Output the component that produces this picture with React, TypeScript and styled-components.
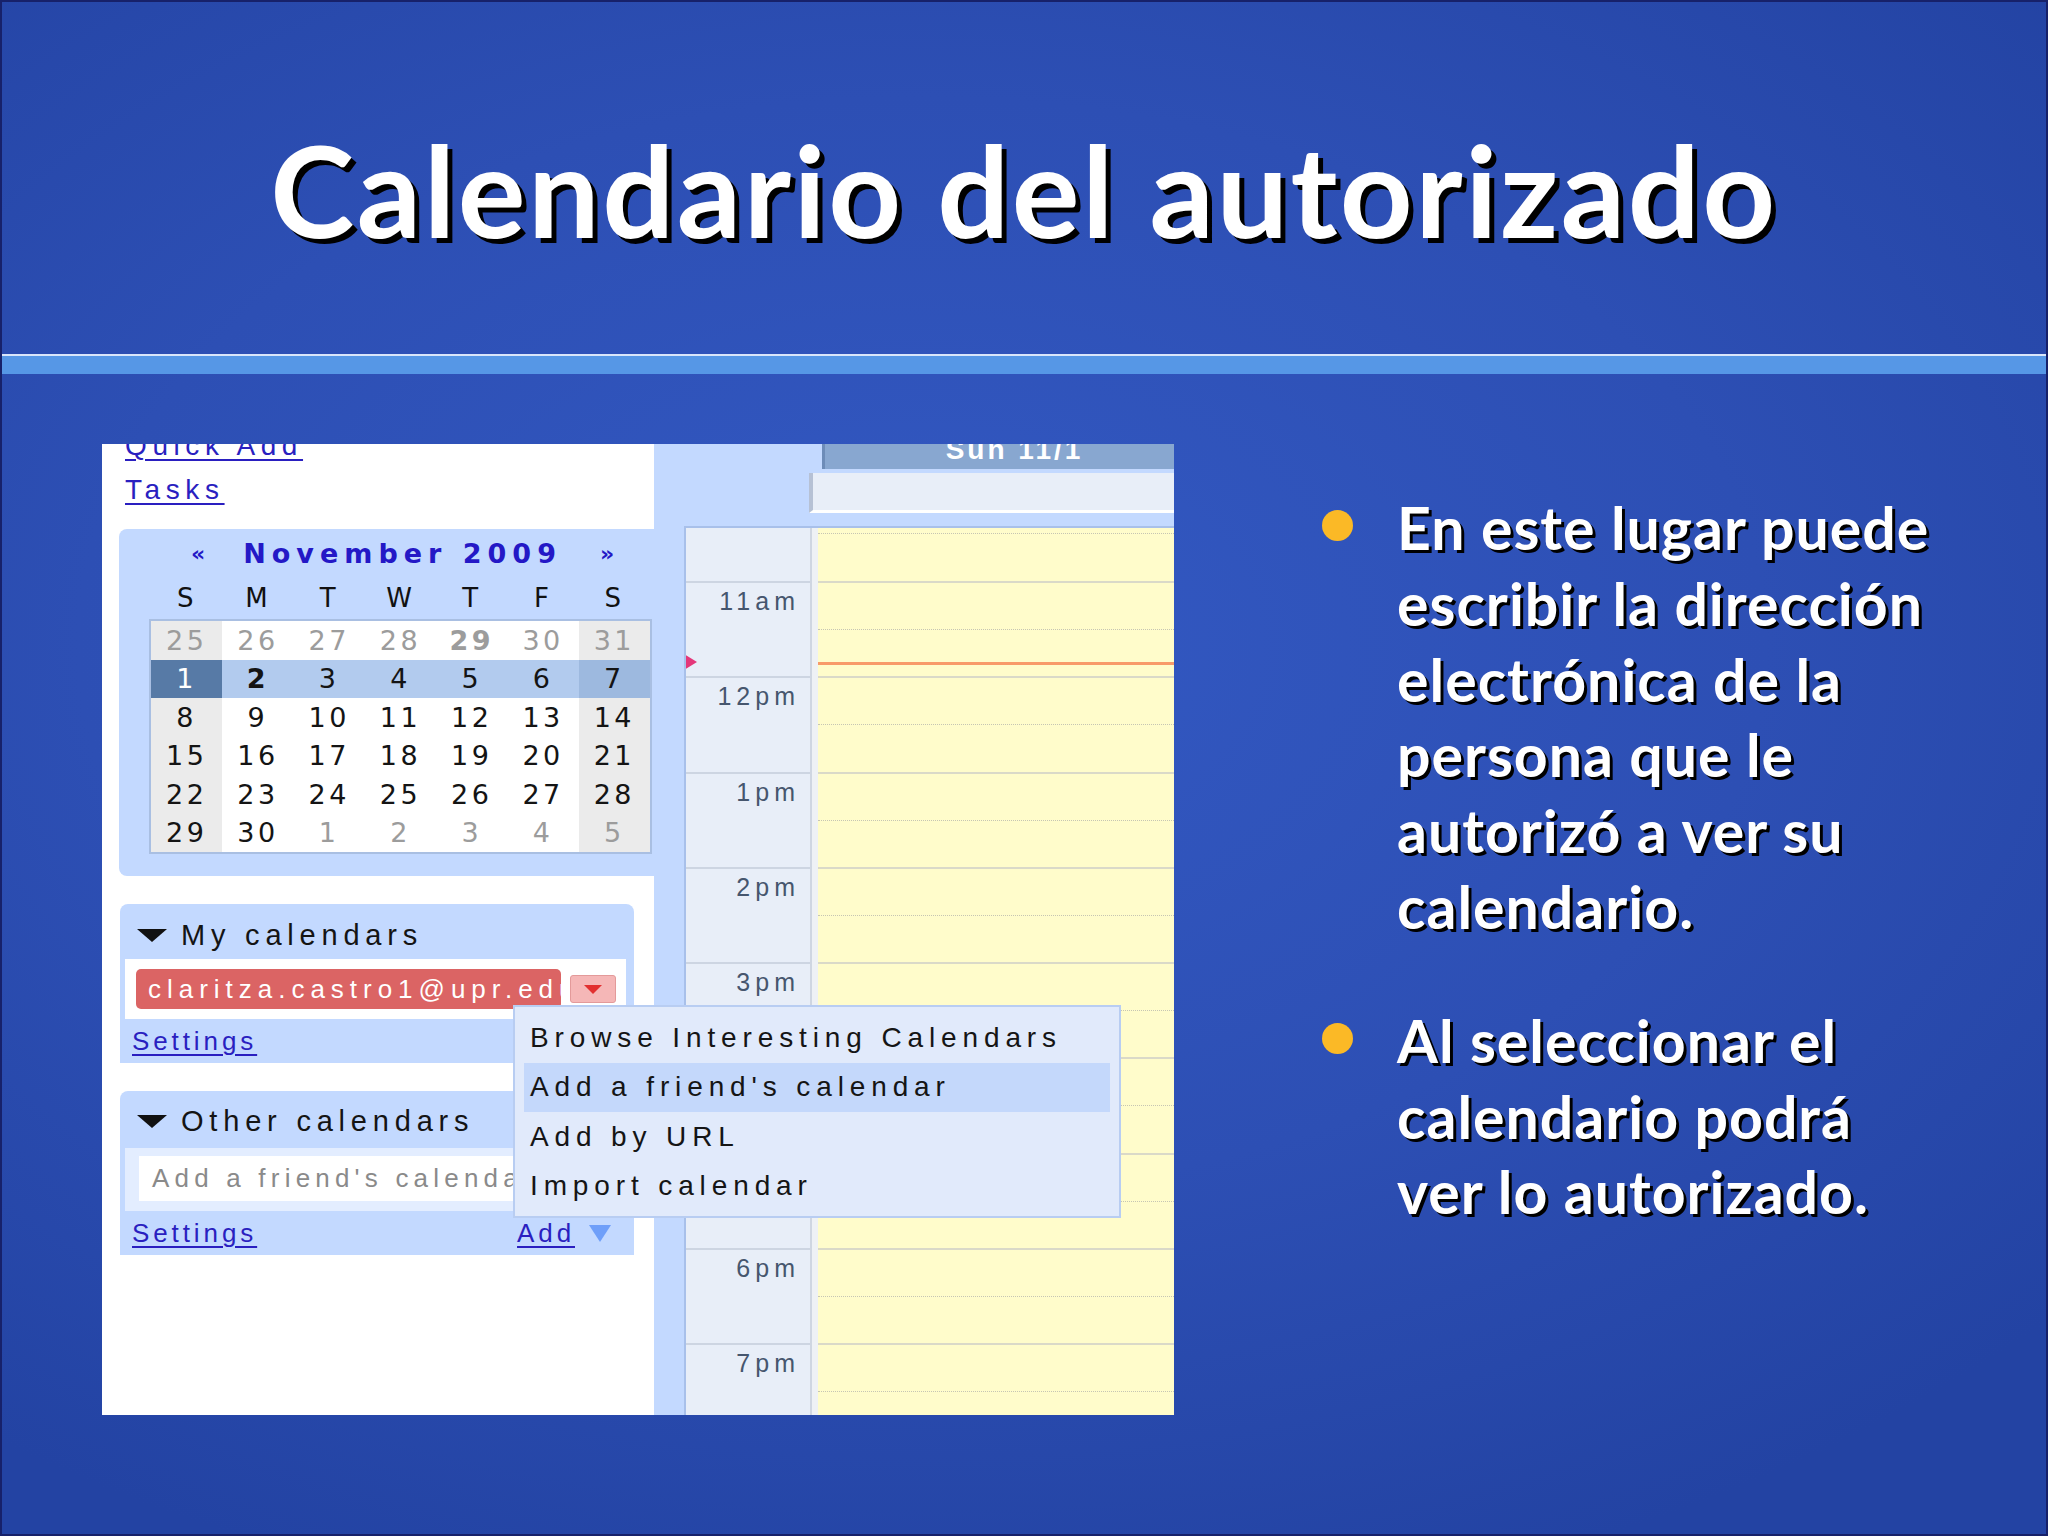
import styled, { createGlobalStyle } from "styled-components";

const GlobalStyle = createGlobalStyle`
  html, body {
    margin: 0;
    padding: 0;
    background: #2242a0;
  }
  body {
    width: 2048px;
    height: 1536px;
    overflow: hidden;
  }
`;

const weeks: number[][] = [
  [25, 26, 27, 28, 29, 30, 31],
  [1, 2, 3, 4, 5, 6, 7],
  [8, 9, 10, 11, 12, 13, 14],
  [15, 16, 17, 18, 19, 20, 21],
  [22, 23, 24, 25, 26, 27, 28],
  [29, 30, 1, 2, 3, 4, 5],
];

const hours = ["11am", "12pm", "1pm", "2pm", "3pm", "4pm", "5pm", "6pm", "7pm"];

const menuItems = [
  "Browse Interesting Calendars",
  "Add a friend's calendar",
  "Add by URL",
  "Import calendar",
];

const bullets: string[][] = [
  [
    "En este lugar puede",
    "escribir la dirección",
    "electrónica de la",
    "persona que le",
    "autorizó a ver su",
    "calendario.",
  ],
  ["Al seleccionar el", "calendario podrá", "ver lo autorizado."],
];

function isMuted(row: number, day: number) {
  return (row === 0 && day > 20) || (row === 5 && day < 20);
}

function DownTriangle({ color, w, h }: { color: string; w: number; h: number }) {
  return (
    <svg width={w} height={h} viewBox={`0 0 ${w} ${h}`}>
      <path d={`M0 0 H${w} L${w / 2} ${h} Z`} fill={color} />
    </svg>
  );
}

export default function App() {
  return (
    <>
      <GlobalStyle />
      <Slide>
        <Header>
          <Title>Calendario del autorizado</Title>
        </Header>
        <Divider />
        <Body>
          <Screenshot>
            <Sidebar>
              <QuickLinks>
                <NavLink>Quick Add</NavLink>
                <NavLink>Tasks</NavLink>
              </QuickLinks>

              <MiniCal>
                <MonthNav>
                  <NavArrow>«</NavArrow>
                  <MonthTitle>November 2009</MonthTitle>
                  <NavArrow $right>»</NavArrow>
                </MonthNav>
                <DayHeads>
                  {["S", "M", "T", "W", "T", "F", "S"].map((d, i) => (
                    <DayHead key={i}>{d}</DayHead>
                  ))}
                </DayHeads>
                <DayGrid>
                  {weeks.map((week, r) =>
                    week.map((day, c) => (
                      <DayCell
                        key={`${r}-${c}`}
                        $weekend={c === 0 || c === 6}
                        $week={r === 1}
                        $selected={r === 1 && c === 0}
                        $muted={isMuted(r, day)}
                        $bold={(r === 0 && day === 29) || (r === 1 && day === 2)}
                      >
                        {day}
                      </DayCell>
                    ))
                  )}
                </DayGrid>
              </MiniCal>

              <CalPanel>
                <PanelHeader>
                  <DownTriangle color="#111" w={30} h={13} />
                  <span>My calendars</span>
                </PanelHeader>
                <EmailRow>
                  <EmailChip>claritza.castro1@upr.edu</EmailChip>
                  <ChipButton>
                    <DownTriangle color="#e23030" w={18} h={9} />
                  </ChipButton>
                </EmailRow>
                <PanelFooter>
                  <SmallLink>Settings</SmallLink>
                </PanelFooter>
              </CalPanel>

              <CalPanel>
                <PanelHeader $tall>
                  <DownTriangle color="#111" w={30} h={13} />
                  <span>Other calendars</span>
                </PanelHeader>
                <InputRow>
                  <FriendInput>Add a friend's calendar</FriendInput>
                </InputRow>
                <PanelFooter>
                  <SmallLink>Settings</SmallLink>
                  <AddGroup>
                    <SmallLink>Add</SmallLink>
                    <DownTriangle color="#6f9ff9" w={22} h={17} />
                  </AddGroup>
                </PanelFooter>
              </CalPanel>
            </Sidebar>

            <DayArea>
              <DayHeader>
                <DayHeaderText>Sun 11/1</DayHeaderText>
              </DayHeader>
              <AllDay />
              <TimeGrid>
                <HourRow $partial>
                  <TimeCell $partial />
                  <Gutter />
                  <DayColumn $partial>
                    <HalfLine $partial />
                  </DayColumn>
                </HourRow>
                {hours.map((h) => (
                  <HourRow key={h}>
                    <TimeCell>{h}</TimeCell>
                    <Gutter />
                    <DayColumn>
                      <HalfLine />
                    </DayColumn>
                  </HourRow>
                ))}
                <NowArrow />
                <NowLine />
              </TimeGrid>
            </DayArea>

            <AddMenu>
              {menuItems.map((item, i) => (
                <MenuItem key={item} $active={i === 1}>
                  {item}
                </MenuItem>
              ))}
            </AddMenu>
          </Screenshot>

          <BulletList>
            {bullets.map((lines, i) => (
              <Bullet key={i}>
                <Dot />
                <BulletText>
                  {lines.map((line) => (
                    <Line key={line}>{line}</Line>
                  ))}
                </BulletText>
              </Bullet>
            ))}
          </BulletList>
        </Body>
      </Slide>
    </>
  );
}

const Slide = styled.div`
  width: 2048px;
  height: 1536px;
  box-sizing: border-box;
  border: 2px solid #17216a;
  background: radial-gradient(
    ellipse 75% 65% at 45% 42%,
    #3359c3 0%,
    #2d4fb4 55%,
    #2343a3 100%
  );
  display: flex;
  flex-direction: column;
  overflow: hidden;
  font-family: Lato, "Open Sans", sans-serif;
`;

const Header = styled.div`
  height: 352px;
  box-sizing: border-box;
  padding-top: 111px;
  display: flex;
  justify-content: center;
`;

const Title = styled.h1`
  margin: 0;
  font-size: 127px;
  line-height: 152px;
  font-weight: 700;
  letter-spacing: 2.5px;
  color: #ffffff;
  text-shadow: 5px 5px 0 #000;
  white-space: nowrap;
`;

const Divider = styled.div`
  height: 18px;
  border-top: 2px solid #d9e6fb;
  background: #5697e6;
`;

const Body = styled.div`
  flex: 1;
  display: flex;
  align-items: flex-start;
  padding: 70px 0 0 100px;
`;

const Screenshot = styled.div`
  position: relative;
  width: 1072px;
  height: 971px;
  flex-shrink: 0;
  display: flex;
  overflow: hidden;
  font-family: "Liberation Sans", Arial, sans-serif;
`;

const Sidebar = styled.div`
  width: 552px;
  flex-shrink: 0;
  background: #ffffff;
  display: flex;
  flex-direction: column;
  overflow: hidden;
`;

const QuickLinks = styled.div`
  margin-top: -20px;
  padding-left: 23px;
  display: flex;
  flex-direction: column;
  align-items: flex-start;
`;

const NavLink = styled.a`
  font-size: 28px;
  line-height: 44px;
  color: #2a1fc0;
  letter-spacing: 0.2em;
  text-decoration: underline;
  text-decoration-thickness: 2px;
  text-underline-offset: 4px;
`;

const MiniCal = styled.div`
  margin: 17px 0 0 17px;
  padding: 0 2px 22px 30px;
  background: #c3d9ff;
  border-radius: 8px 0 0 8px;
  font-family: "DejaVu Sans", Verdana, sans-serif;
`;

const MonthNav = styled.div`
  height: 48px;
  display: flex;
  align-items: center;
  padding-left: 42px;
  gap: 38px;
  color: #2418c6;
  font-weight: bold;
`;

const NavArrow = styled.span<{ $right?: boolean }>`
  font-size: 22px;
  margin-left: ${(p) => (p.$right ? "0" : "0")};
`;

const MonthTitle = styled.span`
  font-size: 27px;
  letter-spacing: 6px;
`;

const DayHeads = styled.div`
  height: 42px;
  padding: 0 2px;
  display: grid;
  grid-template-columns: repeat(7, 1fr);
  align-items: center;
`;

const DayHead = styled.span`
  text-align: center;
  font-size: 26px;
  letter-spacing: 3px;
  color: #111;
`;

const DayGrid = styled.div`
  border: 2px solid #a9bfe2;
  display: grid;
  grid-template-columns: repeat(7, 1fr);
  grid-auto-rows: 38.5px;
`;

const DayCell = styled.span<{
  $weekend: boolean;
  $week: boolean;
  $selected: boolean;
  $muted: boolean;
  $bold: boolean;
}>`
  display: flex;
  align-items: center;
  justify-content: center;
  font-size: 27px;
  letter-spacing: 3.5px;
  font-weight: ${(p) => (p.$bold ? "bold" : "normal")};
  color: ${(p) => (p.$selected ? "#ffffff" : p.$muted ? "#9c9c9c" : "#141414")};
  background: ${(p) =>
    p.$selected
      ? "#577aa6"
      : p.$week
      ? p.$weekend
        ? "#9db9df"
        : "#b2cbee"
      : p.$weekend
      ? "#ebebeb"
      : "#ffffff"};
`;

const CalPanel = styled.div`
  margin: 28px 0 0 18px;
  width: 514px;
  background: #c3d9ff;
  border-radius: 8px 8px 0 0;
  display: flex;
  flex-direction: column;
`;

const PanelHeader = styled.div<{ $tall?: boolean }>`
  height: ${(p) => (p.$tall ? "57px" : "55px")};
  box-sizing: border-box;
  padding: ${(p) => (p.$tall ? "3px" : "7px")} 0 0 17px;
  display: flex;
  align-items: center;
  gap: 14px;
  font-size: 29px;
  letter-spacing: 0.2em;
  color: #141414;
`;

const EmailRow = styled.div`
  height: 60px;
  margin: 0 8px 0 5px;
  padding: 0 10px 0 11px;
  background: #ffffff;
  display: flex;
  align-items: center;
  gap: 9px;
`;

const EmailChip = styled.div`
  width: 425px;
  height: 40px;
  box-sizing: border-box;
  padding: 0 8px 0 12px;
  border-radius: 5px;
  background: #db6464;
  color: #ffffff;
  font-size: 26px;
  line-height: 40px;
  letter-spacing: 0.23em;
  white-space: nowrap;
  overflow: hidden;
`;

const ChipButton = styled.div`
  width: 46px;
  height: 28px;
  box-sizing: border-box;
  border: 1px solid #e39a9a;
  border-radius: 3px;
  background: #f5b7b7;
  display: flex;
  align-items: center;
  justify-content: center;
`;

const PanelFooter = styled.div`
  height: 44px;
  display: flex;
  align-items: center;
  justify-content: space-between;
  padding: 0 23px 0 12px;
`;

const SmallLink = styled.a`
  font-size: 26px;
  color: #2a1fc0;
  letter-spacing: 0.15em;
  text-decoration: underline;
  text-decoration-thickness: 2px;
  text-underline-offset: 4px;
`;

const AddGroup = styled.div`
  display: flex;
  align-items: center;
  gap: 14px;
`;

const InputRow = styled.div`
  height: 63px;
  box-sizing: border-box;
  margin: 0 8px 0 5px;
  padding: 8px 14px 10px 14px;
  background: #e3edff;
  display: flex;
`;

const FriendInput = styled.div`
  flex: 1;
  background: #ffffff;
  padding-left: 13px;
  font-size: 26px;
  line-height: 45px;
  letter-spacing: 0.2em;
  color: #8a8a8a;
  white-space: nowrap;
  overflow: hidden;
`;

const DayArea = styled.div`
  flex: 1;
  background: #c3d9ff;
  padding-left: 30px;
  display: flex;
  flex-direction: column;
`;

const DayHeader = styled.div`
  margin-left: 138px;
  height: 25px;
  border-left: 3px solid #6d8cb8;
  background: #88a7d0;
  overflow: hidden;
  text-align: center;
`;

const DayHeaderText = styled.div`
  margin-top: -9px;
  padding-left: 30px;
  font-size: 28px;
  line-height: 30px;
  font-weight: bold;
  letter-spacing: 3px;
  color: #ffffff;
`;

const AllDay = styled.div`
  margin: 4px 0 0 125px;
  height: 37px;
  border-left: 4px solid #b6c1d5;
  border-bottom: 3px solid #ffffff;
  background: #e8eef8;
`;

const TimeGrid = styled.div`
  position: relative;
  margin-top: 13px;
  flex: 1;
  border-top: 2px solid #a8c0ea;
  border-left: 2px solid #a8c0ea;
  display: flex;
  flex-direction: column;
  overflow: hidden;
`;

const HourRow = styled.div<{ $partial?: boolean }>`
  height: ${(p) => (p.$partial ? "53px" : "95.3px")};
  flex-shrink: 0;
  display: flex;
`;

const TimeCell = styled.div<{ $partial?: boolean }>`
  width: 124px;
  box-sizing: border-box;
  background: #e8eef8;
  border-top: ${(p) => (p.$partial ? "none" : "2px solid #cdd5e2")};
  padding: 3px 10px 0 0;
  text-align: right;
  font-size: 25px;
  line-height: 30px;
  letter-spacing: 0.2em;
  color: #46566e;
`;

const Gutter = styled.div`
  width: 6px;
  border-left: 2px solid #cfd6e1;
  background: #eef1f5;
`;

const DayColumn = styled.div<{ $partial?: boolean }>`
  flex: 1;
  box-sizing: border-box;
  background: #fffccb;
  border-top: ${(p) => (p.$partial ? "none" : "2px solid #dad9c8")};
`;

const HalfLine = styled.div<{ $partial?: boolean }>`
  margin-top: ${(p) => (p.$partial ? "5px" : "46px")};
  border-top: 1px dotted #c6c5b3;
`;

const NowArrow = styled.div`
  position: absolute;
  left: -2px;
  top: 126px;
  width: 0;
  height: 0;
  border-top: 8px solid transparent;
  border-bottom: 8px solid transparent;
  border-left: 13px solid #e4377a;
`;

const NowLine = styled.div`
  position: absolute;
  left: 132px;
  right: 0;
  top: 134px;
  height: 3px;
  background: #f89a6a;
`;

const AddMenu = styled.div`
  position: absolute;
  left: 411px;
  top: 561px;
  width: 608px;
  box-sizing: border-box;
  padding: 6px 9px 5px;
  border: 2px solid #b8cdf2;
  background: #e1eafb;
  display: flex;
  flex-direction: column;
`;

const MenuItem = styled.div<{ $active?: boolean }>`
  height: 49.5px;
  padding-left: 6px;
  display: flex;
  align-items: center;
  font-size: 28px;
  letter-spacing: 0.21em;
  color: #151515;
  background: ${(p) => (p.$active ? "#c4d8fb" : "transparent")};
`;

const BulletList = styled.div`
  margin: 46px 0 0 148px;
  display: flex;
  flex-direction: column;
  gap: 58px;
`;

const Bullet = styled.div`
  display: flex;
  align-items: flex-start;
  gap: 44px;
`;

const Dot = styled.span`
  width: 31px;
  height: 31px;
  margin-top: 20px;
  flex-shrink: 0;
  border-radius: 50%;
  background: #fbb926;
`;

const BulletText = styled.div`
  display: flex;
  flex-direction: column;
  font-size: 59px;
  line-height: 75.8px;
  font-weight: 700;
  letter-spacing: 1px;
  color: #ffffff;
  text-shadow: 3px 3px 0 #000;
`;

const Line = styled.span`
  white-space: nowrap;
`;
